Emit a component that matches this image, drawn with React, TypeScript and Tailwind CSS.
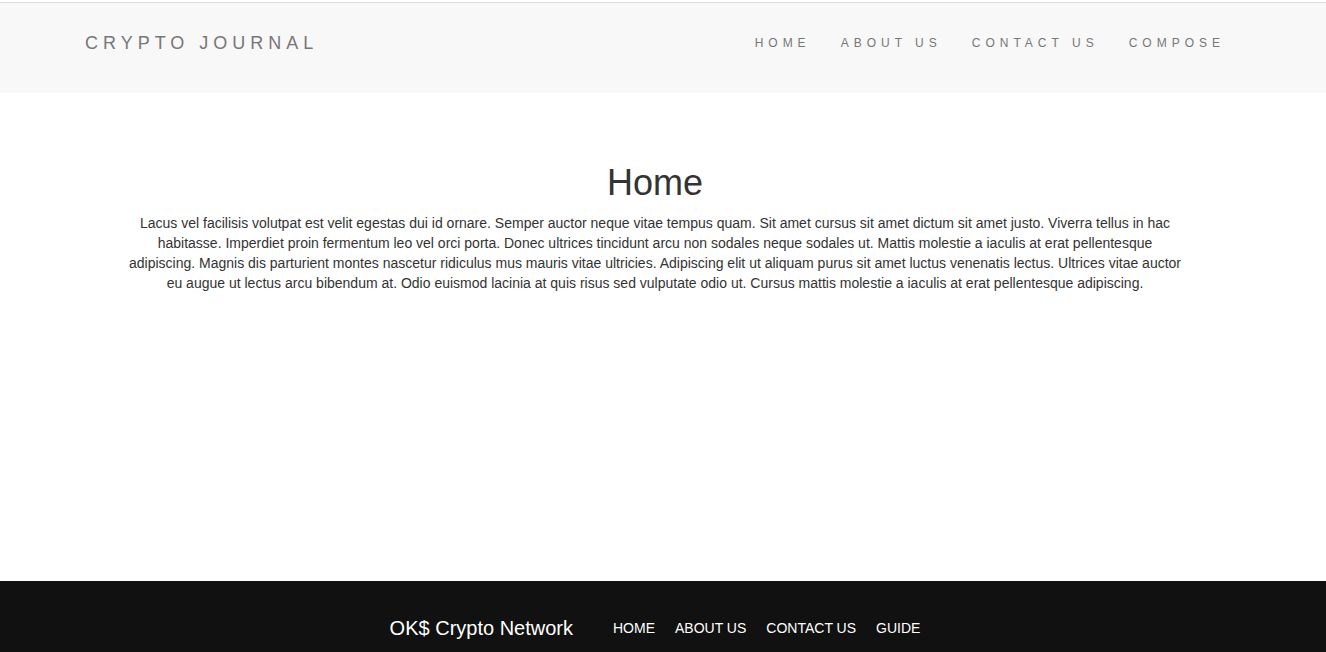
const links = ["HOME", "ABOUT US", "CONTACT US", "COMPOSE"];
const footerLinks = ["HOME", "ABOUT US", "CONTACT US", "GUIDE"];

export default function App() {
  return (
    <div className="flex min-h-screen flex-col bg-white font-['Liberation_Sans',Arial,sans-serif] text-sm leading-5 text-[#333]">
      <div className="h-0.5 bg-white" />
      <header className="border-t border-[#dcdcdc] bg-[#f8f8f8] pt-[30px] pb-10">
        <nav className="mx-auto flex w-full max-w-[1170px] items-center justify-between pr-[23px] pl-[7px] text-[#777]">
          <a href="#" className="text-lg leading-5 tracking-[5px]">CRYPTO JOURNAL</a>
          <ul className="flex gap-[30px] text-xs leading-5 tracking-[5px]">
            {links.map((label) => (
              <li key={label}>
                <a href="#">{label}</a>
              </li>
            ))}
          </ul>
        </nav>
      </header>
      <main className="mr-4 flex-1 px-[125px] pt-[70px] text-center">
        <h1 className="text-4xl leading-10">Home</h1>
        <p className="mt-2.5">
          Lacus vel facilisis volutpat est velit egestas dui id ornare. Semper auctor neque vitae tempus quam. Sit amet cursus sit amet dictum sit amet justo. Viverra tellus in hac habitasse. Imperdiet proin fermentum leo vel orci porta. Donec ultrices tincidunt arcu non sodales neque sodales ut. Mattis molestie a iaculis at erat pellentesque adipiscing. Magnis dis parturient montes nascetur ridiculus mus mauris vitae ultricies. Adipiscing elit ut aliquam purus sit amet luctus venenatis lectus. Ultrices vitae auctor eu augue ut lectus arcu bibendum at. Odio euismod lacinia at quis risus sed vulputate odio ut. Cursus mattis molestie a iaculis at erat pellentesque adipiscing.
        </p>
      </main>
      <footer className="flex items-start justify-center bg-[#111] pt-9 pr-4 pb-3 text-white">
        <span className="mr-10 text-xl leading-[23px]">OK$ Crypto Network</span>
        <ul className="flex gap-5 leading-[22px]">
          {footerLinks.map((label) => (
            <li key={label}>
              <a href="#">{label}</a>
            </li>
          ))}
        </ul>
      </footer>
    </div>
  );
}
